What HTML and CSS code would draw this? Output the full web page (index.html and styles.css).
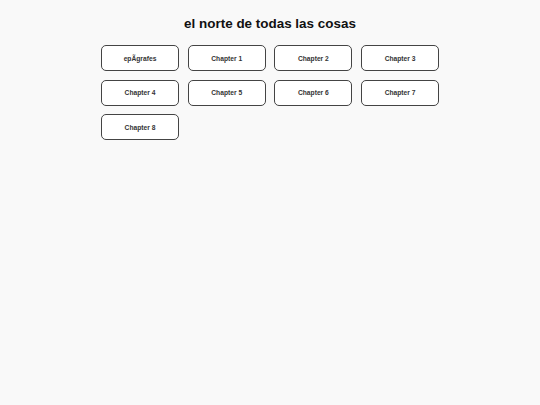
FILE: index.html
```html
<!DOCTYPE html>
<html lang="es">
<head>
<meta charset="utf-8">
<title>el norte de todas las cosas</title>
<link rel="stylesheet" href="styles.css">
</head>
<body>
<main class="page">
  <h1 class="title">el norte de todas las cosas</h1>
  <nav class="chapters">
    <a class="chapter" href="#">epÃgrafes</a>
    <a class="chapter" href="#">Chapter 1</a>
    <a class="chapter" href="#">Chapter 2</a>
    <a class="chapter" href="#">Chapter 3</a>
    <a class="chapter" href="#">Chapter 4</a>
    <a class="chapter" href="#">Chapter 5</a>
    <a class="chapter" href="#">Chapter 6</a>
    <a class="chapter" href="#">Chapter 7</a>
    <a class="chapter" href="#">Chapter 8</a>
  </nav>
</main>
</body>
</html>
```
FILE: styles.css
```css
html, body {
  margin: 0;
  padding: 0;
  background: #f9f9f9;
  font-family: "Liberation Sans", Arial, sans-serif;
}
.page {
  width: 338px;
  margin: 0 auto;
  padding-top: 14px;
}
.title {
  margin: 0 0 11px;
  font-size: 13.45px;
  line-height: 20px;
  font-weight: bold;
  text-align: center;
  color: #111;
}
.chapters {
  display: grid;
  grid-template-columns: repeat(4, 78px);
  column-gap: 8.7px;
  row-gap: 8.7px;
}
.chapter {
  display: flex;
  align-items: center;
  justify-content: center;
  height: 24px;
  border: 1px solid #444;
  border-radius: 5px;
  background: #fff;
  color: #333;
  font-size: 6.7px;
  font-weight: bold;
  text-decoration: none;
}
```
